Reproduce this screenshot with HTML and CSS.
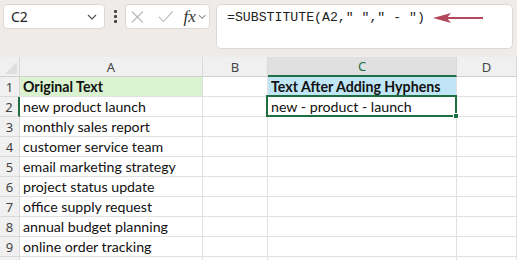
FILE: index.html
```html
<!DOCTYPE html>
<html lang="en">
<head>
  <meta charset="UTF-8">
  <title>SUBSTITUTE - Hyphens</title>
  <link rel="stylesheet" href="styles.css">
</head>
<body>
  <div class="toolbar">
    <div class="name-box">
      <span>C2</span>
      <svg class="chev" width="10" height="6" viewBox="0 0 10 6"><path d="M1 1 L5 5 L9 1" fill="none" stroke="#555" stroke-width="1.2"/></svg>
    </div>
    <div class="dots"><i></i><i></i><i></i></div>
    <div class="fx-box">
      <svg width="14" height="14" viewBox="0 0 14 14"><path d="M1 1 L13 13 M13 1 L1 13" stroke="#b9b9b9" stroke-width="1.2"/></svg>
      <svg width="17" height="13" viewBox="0 0 17 13"><path d="M1 7 L6 12 L16 1" fill="none" stroke="#b9b9b9" stroke-width="1.2"/></svg>
      <span class="fx">fx</span>
      <svg width="9" height="6" viewBox="0 0 9 6"><path d="M1 1 L4.5 4.5 L8 1" fill="none" stroke="#888" stroke-width="1.1"/></svg>
    </div>
    <div class="formula-bar">
      <span class="formula">=SUBSTITUTE(A2," "," - ")</span>
      <svg class="arrow" width="52" height="12" viewBox="0 0 52 12"><path d="M14 6 L50 6" stroke="#b4485b" stroke-width="2.2"/><path d="M0 6 L18 1 L14 6 L18 11 Z" fill="#b4485b"/></svg>
    </div>
  </div>

  <div class="sheet">
    <div class="hd corner"></div>
    <div class="hd">A</div>
    <div class="hd">B</div>
    <div class="hd hd-sel">C</div>
    <div class="hd">D</div>

    <div class="rn">1</div>
    <div class="cell head-a">Original Text</div>
    <div class="cell"></div>
    <div class="cell head-c">Text After Adding Hyphens</div>
    <div class="cell"></div>

    <div class="rn rn-sel">2</div>
    <div class="cell">new product launch</div>
    <div class="cell"></div>
    <div class="cell selected">new - product - launch<span class="sel-box"><span class="handle"></span></span></div>
    <div class="cell"></div>

    <div class="rn">3</div>
    <div class="cell">monthly sales report</div>
    <div class="cell"></div><div class="cell"></div><div class="cell"></div>

    <div class="rn">4</div>
    <div class="cell">customer service team</div>
    <div class="cell"></div><div class="cell"></div><div class="cell"></div>

    <div class="rn">5</div>
    <div class="cell">email marketing strategy</div>
    <div class="cell"></div><div class="cell"></div><div class="cell"></div>

    <div class="rn">6</div>
    <div class="cell">project status update</div>
    <div class="cell"></div><div class="cell"></div><div class="cell"></div>

    <div class="rn">7</div>
    <div class="cell">office supply request</div>
    <div class="cell"></div><div class="cell"></div><div class="cell"></div>

    <div class="rn">8</div>
    <div class="cell">annual budget planning</div>
    <div class="cell"></div><div class="cell"></div><div class="cell"></div>

    <div class="rn">9</div>
    <div class="cell">online order tracking</div>
    <div class="cell"></div><div class="cell"></div><div class="cell"></div>

    <div class="rn"></div>
    <div class="cell"></div><div class="cell"></div><div class="cell"></div><div class="cell"></div>
  </div>
</body>
</html>
```

FILE: styles.css
```css
* {
  margin: 0;
  padding: 0;
  box-sizing: border-box;
}

body {
  width: 517px;
  height: 260px;
  overflow: hidden;
  background: #fff;
  font-family: 'Lato', sans-serif;
  color: #1a1a1a;
}

/* Top formula toolbar */
.toolbar {
  height: 57px;
  background: #efebe9;
  display: flex;
  align-items: flex-start;
  padding: 4px 4px 0 3px;
}

.name-box {
  width: 102px;
  height: 25px;
  background: #fff;
  border: 1px solid #dcd8d6;
  border-radius: 4px;
  display: flex;
  align-items: center;
  justify-content: space-between;
  padding: 0 7px 0 7px;
  font-family: 'Noto Sans', sans-serif;
  font-size: 14px;
  color: #222;
}

.dots {
  width: 20px;
  height: 25px;
  display: flex;
  flex-direction: column;
  align-items: center;
  justify-content: center;
  gap: 2px;
}

.dots i {
  width: 3px;
  height: 3px;
  background: #444;
  border-radius: 1px;
}

.fx-box {
  width: 85px;
  height: 25px;
  background: #fff;
  border: 1px solid #dcd8d6;
  border-radius: 4px;
  display: flex;
  align-items: center;
  padding: 0 3px 0 5px;
}

.fx-box svg:nth-child(1) { margin-right: 14px; }
.fx-box svg:nth-child(2) { margin-right: 10px; }

.fx {
  font-family: 'Liberation Serif', serif;
  font-style: italic;
  font-size: 17px;
  color: #333;
  margin-right: 2px;
  line-height: 1;
}

.formula-bar {
  margin-left: 6px;
  width: 297px;
  height: 45px;
  background: #fff;
  border: 1px solid #dcd8d6;
  border-radius: 5px;
  display: flex;
  align-items: flex-start;
  padding: 4px 0 0 10px;
}

.formula {
  font-family: 'Liberation Mono', monospace;
  font-size: 13.2px;
  color: #222;
  line-height: 18px;
}

.arrow {
  margin: 3px 0 0 8px;
}

/* Worksheet grid */
.sheet {
  display: grid;
  grid-template-columns: 20px 183px 65px 189px 60px;
  grid-template-rows: 20px;
  grid-auto-rows: 20px;
}

.hd {
  background: #f0f0f0;
  border-right: 1px solid #d8d8d8;
  border-bottom: 1px solid #d0d0d0;
  font-family: 'Noto Sans', sans-serif;
  font-size: 13px;
  color: #444;
  display: flex;
  align-items: center;
  justify-content: center;
}

.corner {
  position: relative;
}

.corner::after {
  content: "";
  position: absolute;
  right: 2px;
  bottom: 2px;
  border-left: 12px solid transparent;
  border-bottom: 12px solid #dedede;
}

.hd-sel {
  background: #e0e0e0;
  color: #1e6e42;
  border-bottom: 2px solid #1e6e42;
}

.rn {
  background: #f0f0f0;
  border-right: 1px solid #d8d8d8;
  border-bottom: 1px solid #dadada;
  font-family: 'Noto Sans', sans-serif;
  font-size: 13px;
  color: #444;
  display: flex;
  align-items: center;
  justify-content: center;
}

.rn-sel {
  border-right: 2px solid #1e6e42;
}

.cell {
  border-right: 1px solid #e1e1e1;
  border-bottom: 1px solid #e1e1e1;
  font-size: 14.2px;
  line-height: 20px;
  padding-left: 3px;
  white-space: nowrap;
  color: #111;
}

.head-a {
  background: #daf2d0;
  font-weight: bold;
}

.head-c {
  background: #c0e6f5;
  font-weight: bold;
}

.selected {
  position: relative;
}

.sel-box {
  position: absolute;
  left: -2px;
  top: -2px;
  right: -1px;
  bottom: -1px;
  border: 2px solid #1e6e42;
}

.handle {
  position: absolute;
  right: -4px;
  bottom: -4px;
  width: 6px;
  height: 6px;
  background: #1e6e42;
  border: 1px solid #fff;
}
```
